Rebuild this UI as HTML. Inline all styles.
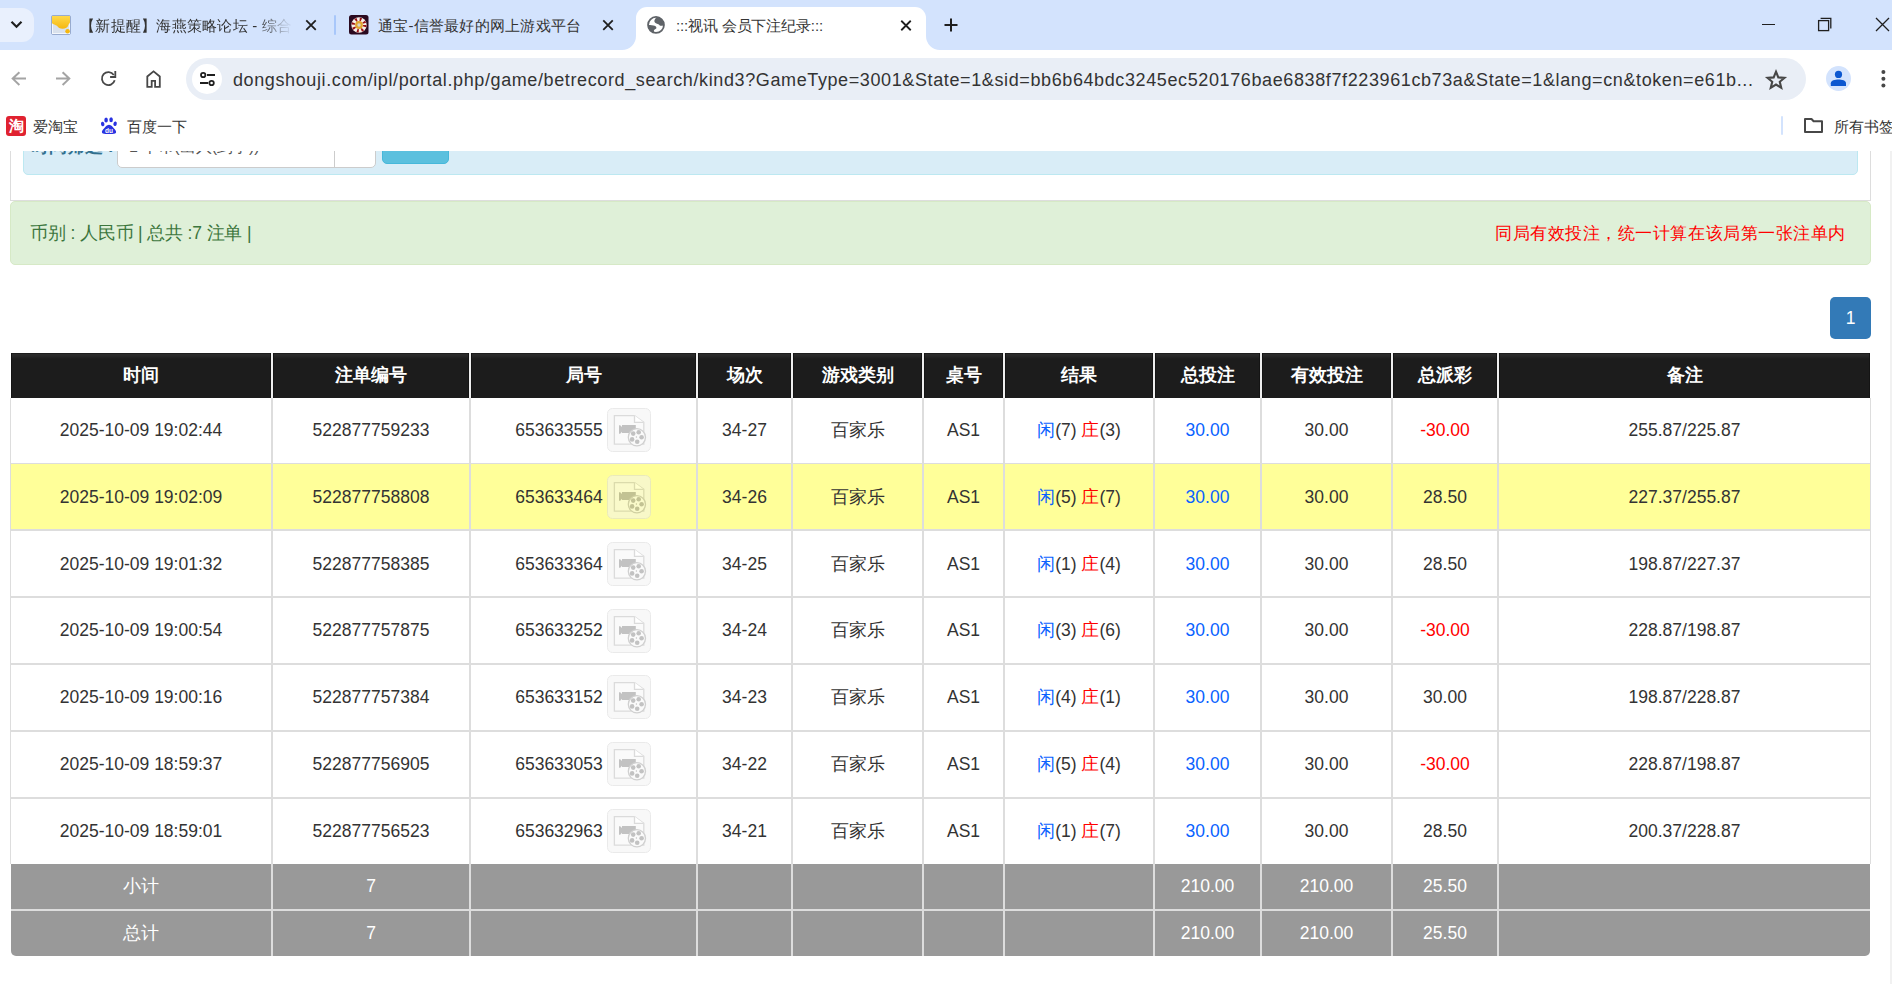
<!DOCTYPE html><html><head><meta charset="utf-8"><title>:::视讯 会员下注纪录:::</title><style>
*{box-sizing:border-box}
html,body{margin:0;padding:0}
body{width:1892px;height:984px;overflow:hidden;position:relative;background:#fff;font-family:"Liberation Sans",sans-serif;color:#333}
.a{position:absolute}
svg{position:absolute;overflow:visible}
.tt{position:absolute;white-space:nowrap;font-size:15px;color:#333;line-height:17px}
#vp{position:absolute;left:0;top:151px;width:1892px;height:833px;overflow:hidden}
.c{position:absolute;display:flex;align-items:center;justify-content:center;white-space:nowrap;font-size:17.5px;line-height:20px}
.hd{color:#fff;font-weight:bold;letter-spacing:0px;background:linear-gradient(#1c1c1c 0,#1c1c1c 1px,#2b2b2b 1px,#272727 3px,#1c1c1c 6px,#1c1c1c);box-shadow:inset 1px 0 #141414,inset -1px 0 #141414}
.b{color:#0a62ff}
.r{color:#f00}
.ic{display:inline-block;width:44px;height:44px;border-radius:5.5px;background:#f2f2f2;border:1px solid #d8d8d8;margin-left:5px;position:relative;left:-.6px;top:.2px;opacity:.53}
</style></head><body>
<div class="a" style="left:0;top:0;width:1892px;height:50px;background:#d3e3fd"></div>
<div class="a" style="left:-12px;top:8px;width:46px;height:34px;border-radius:12px;background:#e9f0fd"></div>
<svg style="left:0;top:0" width="40" height="50"><path d="M11.5 21.8 L16.5 26.8 L21.5 21.8" fill="none" stroke="#1f1f1f" stroke-width="2.2"/></svg>
<svg style="left:51px;top:15px" width="20" height="20" viewBox="0 0 20 20"><defs><linearGradient id="yg" x1="0" y1="0" x2="0" y2="1"><stop offset="0" stop-color="#ffd94a"/><stop offset="1" stop-color="#f5b70f"/></linearGradient></defs><rect x="0.5" y="0.5" width="19" height="19" rx="1.5" fill="#dfe5ee" stroke="#98abcf" stroke-width="1"/><rect x="1.5" y="1.5" width="17" height="17" fill="#d9e1ec" stroke="#f4f7fb" stroke-width="1"/><path d="M1 1 L19 1 L19 7.4 C18.5 8.5 17.4 9.5 17.2 10.5 C16.8 12.3 14.5 13.8 11.6 13.8 C9 13.8 7.2 12.5 6 10.8 C4.5 9.8 2.2 9.2 1 8.2 Z" fill="url(#yg)"/><circle cx="16.6" cy="16.2" r="2.3" fill="#f5b70f"/></svg>
<div class="tt" style="left:80px;top:17px;width:212px;letter-spacing:.25px;overflow:hidden;-webkit-mask-image:linear-gradient(90deg,#000 178px,transparent 212px)">【新提醒】海燕策略论坛 - 综合论坛</div>
<svg style="left:0;top:0" width="1" height="1"><path d="M306.25 20.45 L315.75 29.95 M315.75 20.45 L306.25 29.95" stroke="#1f1f1f" stroke-width="1.8" fill="none"/></svg>
<div class="a" style="left:334px;top:15px;width:2px;height:20px;border-radius:1px;background:#a8c7fa"></div>
<svg style="left:349px;top:15px" width="20" height="20" viewBox="0 0 20 20"><rect x="0" y="0" width="19.5" height="19.5" rx="2.5" fill="#2a0a20"/><circle cx="10" cy="10" r="7.7" fill="#f6efe8"/><circle cx="10" cy="10" r="5.7" fill="none" stroke="#981015" stroke-width="3.4" stroke-dasharray="1.8 2.68"/><circle cx="10" cy="10" r="3.9" fill="#e1a630"/><circle cx="10" cy="10" r="1.7" fill="#d9d4c8"/></svg>
<div class="tt" style="left:378px;top:17px;letter-spacing:.25px">通宝-信誉最好的网上游戏平台</div>
<svg style="left:0;top:0" width="1" height="1"><path d="M603.25 20.45 L612.75 29.95 M612.75 20.45 L603.25 29.95" stroke="#1f1f1f" stroke-width="1.8" fill="none"/></svg>
<div class="a" style="left:636px;top:7px;width:290px;height:44px;background:#fff;border-radius:11px 11px 0 0"></div>
<svg style="left:622px;top:36px" width="14" height="14"><path d="M14 0 L14 14 L0 14 A14 14 0 0 0 14 0 Z" fill="#fff"/></svg>
<svg style="left:926px;top:36px" width="14" height="14"><path d="M0 0 L0 14 L14 14 A14 14 0 0 1 0 0 Z" fill="#fff"/></svg>
<svg style="left:0;top:0" width="1" height="1"><circle cx="656" cy="24.9" r="7.95" fill="none" stroke="#5f6368" stroke-width="1.8"/><path d="M657 17 C655.3 18.4 654.1 20.1 654.4 21.6 C654.8 23.1 656.6 23.6 658.3 24.2 C659.2 24.6 659.5 25.4 660.3 25.7 C661.3 26 662.7 25.5 664 25.2 A8 8 0 0 0 657 17 Z" fill="#5f6368"/><path d="M648 24.9 C650.8 25 653.2 25 654.6 25.7 C656.1 26.4 656.9 27.7 656.2 28.6 C655.4 29.4 653.9 29.7 653.9 30.5 C653.9 31.3 654 32 654.1 32.7 A8 8 0 0 1 648 24.9 Z" fill="#5f6368"/></svg>
<div class="tt" style="left:676px;top:17px;letter-spacing:-.15px">:::视讯 会员下注纪录:::</div>
<svg style="left:0;top:0" width="1" height="1"><path d="M901.25 20.75 L910.75 30.25 M910.75 20.75 L901.25 30.25" stroke="#1f1f1f" stroke-width="1.8" fill="none"/></svg>
<svg style="left:0;top:0" width="1" height="1"><path d="M951 18.5 L951 31.5 M944.5 25 L957.5 25" stroke="#1f1f1f" stroke-width="2" fill="none"/></svg>
<div class="a" style="left:1762px;top:24px;width:13px;height:1.3px;background:#1f1f1f"></div>
<svg style="left:0;top:0" width="1" height="1"><rect x="1818.6" y="20.6" width="10" height="10" fill="none" stroke="#1f1f1f" stroke-width="1.3"/><path d="M1820.6 18.4 L1830.8 18.4 L1830.8 28.6" fill="none" stroke="#1f1f1f" stroke-width="1.3"/></svg>
<svg style="left:0;top:0" width="1" height="1"><path d="M1876 18 L1889 31 M1889 18 L1876 31" stroke="#1f1f1f" stroke-width="1.3" fill="none"/></svg>
<svg style="left:0;top:0" width="1" height="1"><path d="M26 78.6 L13 78.6 M19.4 72.2 L12.7 78.6 L19.4 85" stroke="#a4a4a4" stroke-width="2" fill="none"/><path d="M56 78.6 L69 78.6 M62.6 72.2 L69.3 78.6 L62.6 85" stroke="#a4a4a4" stroke-width="2" fill="none"/></svg>
<svg style="left:0;top:0" width="1" height="1"><path d="M113.8 74.9 A6.5 6.5 0 1 0 114.7 80.3" stroke="#474747" stroke-width="1.8" fill="none"/><path d="M110.1 77 L115.3 77 L115.3 71" stroke="#474747" stroke-width="1.8" fill="none"/></svg>
<svg style="left:0;top:0" width="1" height="1"><path d="M147.3 86.9 L147.3 76.5 L153.55 71.3 L159.8 76.5 L159.8 86.9 L155.1 86.9 L155.1 80.8 L151.7 80.8 L151.7 86.9 Z" stroke="#474747" stroke-width="1.8" fill="none" stroke-linejoin="miter"/></svg>
<div class="a" style="left:186px;top:58px;width:1620px;height:42px;border-radius:21px;background:#e9eef6"></div>
<div class="a" style="left:192px;top:64px;width:30px;height:30px;border-radius:50%;background:#fff"></div>
<svg style="left:0;top:0" width="1" height="1"><circle cx="203.2" cy="75" r="2.2" fill="none" stroke="#1f1f1f" stroke-width="1.8"/><path d="M207 75 L215 75 M200 83 L208.2 83" stroke="#1f1f1f" stroke-width="1.8"/><circle cx="211.6" cy="83" r="2.2" fill="none" stroke="#1f1f1f" stroke-width="1.8"/></svg>
<div class="tt" style="left:233px;top:69.5px;font-size:18px;line-height:21px;letter-spacing:0.612px">dongshouji.com/ipl/portal.php/game/betrecord_search/kind3?GameType=3001&amp;State=1&amp;sid=bb6b64bdc3245ec520176bae6838f7f223961cb73a&amp;State=1&amp;lang=cn&amp;token=e61b...</div>
<svg style="left:0;top:0" width="1" height="1"><path d="M1776.00 71.70 L1778.32 77.40 L1784.46 77.85 L1779.76 81.82 L1781.23 87.80 L1776.00 84.55 L1770.77 87.80 L1772.24 81.82 L1767.54 77.85 L1773.68 77.40 Z" fill="none" stroke="#474747" stroke-width="2.1" stroke-linejoin="miter"/></svg>
<div class="a" style="left:1826px;top:66px;width:25px;height:25px;border-radius:50%;background:#d3e3fd"></div>
<svg style="left:0;top:0" width="1" height="1"><circle cx="1838.5" cy="74.4" r="3.6" fill="#0b57d0"/><path d="M1830.8 86 L1830.8 83.2 C1830.8 80.6 1835 79.6 1838.4 79.6 C1841.8 79.6 1846 80.6 1846 83.2 L1846 86 Z" fill="#0b57d0"/></svg>
<svg style="left:0;top:0" width="1" height="1"><circle cx="1883.4" cy="72" r="2" fill="#474747"/><circle cx="1883.4" cy="78.7" r="2" fill="#474747"/><circle cx="1883.4" cy="85.5" r="2" fill="#474747"/></svg>
<div class="a" style="left:6px;top:116px;width:20px;height:20px;border-radius:3px;background:#e02230;color:#fff;font-size:15px;line-height:20px;text-align:center;font-weight:bold">淘</div>
<div class="tt" style="left:33px;top:118px">爱淘宝</div>
<svg style="left:101px;top:117px" width="17" height="18" viewBox="0 0 17 18"><ellipse cx="1.7" cy="7" rx="1.7" ry="2.3" fill="#2932e1" transform="rotate(-15 1.7 7)"/><ellipse cx="5.1" cy="2.9" rx="1.8" ry="2.5" fill="#2932e1"/><ellipse cx="10.1" cy="2.7" rx="1.8" ry="2.5" fill="#2932e1"/><ellipse cx="14.1" cy="6.8" rx="1.7" ry="2.3" fill="#2932e1" transform="rotate(15 14.1 6.8)"/><path d="M8 7.7 C5.5 7.7 4.5 10 3 11.5 C1.5 13 0.9 14 0.9 15 C0.9 16.5 2.5 16.9 4.5 16.9 L11.5 16.9 C13.5 16.9 15.1 16.5 15.1 15 C15.1 14 14.5 13 13 11.5 C11.5 10 10.5 7.7 8 7.7Z" fill="#2932e1"/><text x="8" y="15.6" font-size="6.5" font-family="Liberation Sans" font-weight="bold" fill="#fff" text-anchor="middle">du</text></svg>
<div class="tt" style="left:127px;top:118px">百度一下</div>
<div class="a" style="left:1781px;top:116px;width:2px;height:19px;border-radius:1px;background:#d3e3fd"></div>
<svg style="left:0;top:0" width="1" height="1"><path d="M1805 119 L1811.5 119 L1813.6 121.2 L1822 121.2 L1822 132 L1805 132 Z" stroke="#474747" stroke-width="2" fill="none" stroke-linejoin="round"/></svg>
<div class="tt" style="left:1834px;top:118px">所有书签</div>
<div id="vp">
<div class="a" style="left:10px;top:-61px;width:1861px;height:111px;border:1px solid #ddd;border-top:0"></div>
<div class="a" style="left:23px;top:-51px;width:1835px;height:75px;border:1px solid #bce8f1;background:#d9edf7;border-radius:5px"></div>
<div class="a" style="left:31px;top:-15.5px;font-size:17.5px;line-height:20px;font-weight:bold;color:#31708f;white-space:nowrap">时间筛选 :</div>
<div class="a" style="left:117px;top:-31px;width:259px;height:48px;border:1px solid #ccc;border-radius:5px;background:#fff"></div>
<div class="a" style="left:334px;top:-31px;width:1px;height:47px;background:#ccc"></div>
<div class="a" style="left:129px;top:-13.699999999999989px;font-size:16px;line-height:20px;color:#555;white-space:nowrap">1 千币(出入(到予))</div>
<div class="a" style="left:382px;top:-31px;width:67px;height:44px;border:1px solid #46b8da;background:#5bc0de;border-radius:5px"></div>
<div class="a" style="left:10px;top:50px;width:1861px;height:64px;border:1px solid #d6e9c6;background:#dff0d8;border-radius:5px"></div>
<div class="a" style="left:30px;top:72.30000000000001px;font-size:17.5px;line-height:20px;letter-spacing:-.15px;color:#3c763d;white-space:nowrap">币别 : 人民币 | 总共 :7 注单 |</div>
<div class="a" style="left:1495px;top:73px;font-size:17px;letter-spacing:0.55px;line-height:20px;color:#f00;white-space:nowrap">同局有效投注，统一计算在该局第一张注单内</div>
<div class="a" style="left:1830px;top:146px;width:41px;height:42px;background:#337ab7;border-radius:5px;color:#fff;font-size:17.5px;line-height:42px;text-align:center">1</div>
<div class="a" style="left:11px;top:202px;width:1859px;height:45px;background:#1c1c1c"></div>
<div class="c hd" style="left:11px;top:202px;width:260px;height:45px;padding-bottom:1.6px">时间</div>
<div class="c hd" style="left:273px;top:202px;width:196px;height:45px;padding-bottom:1.6px">注单编号</div>
<div class="c hd" style="left:471px;top:202px;width:225px;height:45px;padding-bottom:1.6px">局号</div>
<div class="c hd" style="left:698px;top:202px;width:93px;height:45px;padding-bottom:1.6px">场次</div>
<div class="c hd" style="left:793px;top:202px;width:129px;height:45px;padding-bottom:1.6px">游戏类别</div>
<div class="c hd" style="left:924px;top:202px;width:79px;height:45px;padding-bottom:1.6px">桌号</div>
<div class="c hd" style="left:1005px;top:202px;width:148px;height:45px;padding-bottom:1.6px">结果</div>
<div class="c hd" style="left:1155px;top:202px;width:105px;height:45px;padding-bottom:1.6px">总投注</div>
<div class="c hd" style="left:1262px;top:202px;width:129px;height:45px;padding-bottom:1.6px">有效投注</div>
<div class="c hd" style="left:1393px;top:202px;width:104px;height:45px;padding-bottom:1.6px">总派彩</div>
<div class="c hd" style="left:1499px;top:202px;width:371px;height:45px;padding-bottom:1.6px">备注</div>
<div class="a" style="left:11px;top:247px;width:1859px;height:65px;background:#fff"></div>
<div class="a" style="left:10px;top:312px;width:1861px;height:1px;background:#ddd;z-index:1"></div>
<div class="c" style="left:11px;top:246.00px;width:260px;height:66px">2025-10-09 19:02:44</div>
<div class="c" style="left:273px;top:246.00px;width:196px;height:66px">522877759233</div>
<div class="c" style="left:471px;top:246.00px;width:225px;height:66px">653633555<span class="ic"><svg style="left:-1px;top:-1px" width="44" height="44" viewBox="0 0 44 44"><path d="M7.4 7.6 L27.5 7.6 L36.8 14.4 L36.8 36.2 L7.4 36.2 Z" fill="#f7f7f7" stroke="#bdbdbd" stroke-width="1.3"/><path d="M27.5 7.6 L27.5 14.4 L36.8 14.4" fill="#fff" stroke="#bdbdbd" stroke-width="1.3"/><path d="M12 17.3 L13.2 17.3 L15 19 L15 16.9 L28.8 16.9 L28.8 24.9 L15 24.9 L15 23.8 L13.2 25.8 L12 25.8 Z" fill="#8e8e8e"/><circle cx="29.9" cy="29.3" r="8.6" fill="#f7f7f7" stroke="#a8a8a8" stroke-width="1.3"/><circle cx="26.2" cy="25.6" r="2.3" fill="#8e8e8e"/><circle cx="31.7" cy="24.3" r="2.3" fill="#8e8e8e"/><circle cx="34.6" cy="29.3" r="2.3" fill="#8e8e8e"/><circle cx="30.2" cy="33.8" r="2.3" fill="#8e8e8e"/><circle cx="25.1" cy="31.4" r="2.3" fill="#8e8e8e"/><circle cx="29.4" cy="29" r="0.7" fill="#8e8e8e"/></svg></span></div>
<div class="c" style="left:698px;top:246.00px;width:93px;height:66px">34-27</div>
<div class="c" style="left:793px;top:246.00px;width:129px;height:66px">百家乐</div>
<div class="c" style="left:924px;top:246.00px;width:79px;height:66px">AS1</div>
<div class="c" style="left:1005px;top:246.00px;width:148px;height:66px"><span class="b">闲</span>(7)&nbsp;<span class="r">庄</span>(3)</div>
<div class="c" style="left:1155px;top:246.00px;width:105px;height:66px"><span class="b">30.00</span></div>
<div class="c" style="left:1262px;top:246.00px;width:129px;height:66px">30.00</div>
<div class="c" style="left:1393px;top:246.00px;width:104px;height:66px"><span class="r">-30.00</span></div>
<div class="c" style="left:1499px;top:246.00px;width:371px;height:66px">255.87/225.87</div>
<div class="a" style="left:11px;top:313px;width:1859px;height:65px;background:#ffff99"></div>
<div class="a" style="left:10px;top:378px;width:1861px;height:2px;background:#ddd;z-index:1"></div>
<div class="c" style="left:11px;top:312.82px;width:260px;height:66px">2025-10-09 19:02:09</div>
<div class="c" style="left:273px;top:312.82px;width:196px;height:66px">522877758808</div>
<div class="c" style="left:471px;top:312.82px;width:225px;height:66px">653633464<span class="ic"><svg style="left:-1px;top:-1px" width="44" height="44" viewBox="0 0 44 44"><path d="M7.4 7.6 L27.5 7.6 L36.8 14.4 L36.8 36.2 L7.4 36.2 Z" fill="#f7f7f7" stroke="#bdbdbd" stroke-width="1.3"/><path d="M27.5 7.6 L27.5 14.4 L36.8 14.4" fill="#fff" stroke="#bdbdbd" stroke-width="1.3"/><path d="M12 17.3 L13.2 17.3 L15 19 L15 16.9 L28.8 16.9 L28.8 24.9 L15 24.9 L15 23.8 L13.2 25.8 L12 25.8 Z" fill="#8e8e8e"/><circle cx="29.9" cy="29.3" r="8.6" fill="#f7f7f7" stroke="#a8a8a8" stroke-width="1.3"/><circle cx="26.2" cy="25.6" r="2.3" fill="#8e8e8e"/><circle cx="31.7" cy="24.3" r="2.3" fill="#8e8e8e"/><circle cx="34.6" cy="29.3" r="2.3" fill="#8e8e8e"/><circle cx="30.2" cy="33.8" r="2.3" fill="#8e8e8e"/><circle cx="25.1" cy="31.4" r="2.3" fill="#8e8e8e"/><circle cx="29.4" cy="29" r="0.7" fill="#8e8e8e"/></svg></span></div>
<div class="c" style="left:698px;top:312.82px;width:93px;height:66px">34-26</div>
<div class="c" style="left:793px;top:312.82px;width:129px;height:66px">百家乐</div>
<div class="c" style="left:924px;top:312.82px;width:79px;height:66px">AS1</div>
<div class="c" style="left:1005px;top:312.82px;width:148px;height:66px"><span class="b">闲</span>(5)&nbsp;<span class="r">庄</span>(7)</div>
<div class="c" style="left:1155px;top:312.82px;width:105px;height:66px"><span class="b">30.00</span></div>
<div class="c" style="left:1262px;top:312.82px;width:129px;height:66px">30.00</div>
<div class="c" style="left:1393px;top:312.82px;width:104px;height:66px">28.50</div>
<div class="c" style="left:1499px;top:312.82px;width:371px;height:66px">227.37/255.87</div>
<div class="a" style="left:11px;top:379px;width:1859px;height:66px;background:#fff"></div>
<div class="a" style="left:10px;top:445px;width:1861px;height:2px;background:#ddd;z-index:1"></div>
<div class="c" style="left:11px;top:379.65px;width:260px;height:66px">2025-10-09 19:01:32</div>
<div class="c" style="left:273px;top:379.65px;width:196px;height:66px">522877758385</div>
<div class="c" style="left:471px;top:379.65px;width:225px;height:66px">653633364<span class="ic"><svg style="left:-1px;top:-1px" width="44" height="44" viewBox="0 0 44 44"><path d="M7.4 7.6 L27.5 7.6 L36.8 14.4 L36.8 36.2 L7.4 36.2 Z" fill="#f7f7f7" stroke="#bdbdbd" stroke-width="1.3"/><path d="M27.5 7.6 L27.5 14.4 L36.8 14.4" fill="#fff" stroke="#bdbdbd" stroke-width="1.3"/><path d="M12 17.3 L13.2 17.3 L15 19 L15 16.9 L28.8 16.9 L28.8 24.9 L15 24.9 L15 23.8 L13.2 25.8 L12 25.8 Z" fill="#8e8e8e"/><circle cx="29.9" cy="29.3" r="8.6" fill="#f7f7f7" stroke="#a8a8a8" stroke-width="1.3"/><circle cx="26.2" cy="25.6" r="2.3" fill="#8e8e8e"/><circle cx="31.7" cy="24.3" r="2.3" fill="#8e8e8e"/><circle cx="34.6" cy="29.3" r="2.3" fill="#8e8e8e"/><circle cx="30.2" cy="33.8" r="2.3" fill="#8e8e8e"/><circle cx="25.1" cy="31.4" r="2.3" fill="#8e8e8e"/><circle cx="29.4" cy="29" r="0.7" fill="#8e8e8e"/></svg></span></div>
<div class="c" style="left:698px;top:379.65px;width:93px;height:66px">34-25</div>
<div class="c" style="left:793px;top:379.65px;width:129px;height:66px">百家乐</div>
<div class="c" style="left:924px;top:379.65px;width:79px;height:66px">AS1</div>
<div class="c" style="left:1005px;top:379.65px;width:148px;height:66px"><span class="b">闲</span>(1)&nbsp;<span class="r">庄</span>(4)</div>
<div class="c" style="left:1155px;top:379.65px;width:105px;height:66px"><span class="b">30.00</span></div>
<div class="c" style="left:1262px;top:379.65px;width:129px;height:66px">30.00</div>
<div class="c" style="left:1393px;top:379.65px;width:104px;height:66px">28.50</div>
<div class="c" style="left:1499px;top:379.65px;width:371px;height:66px">198.87/227.37</div>
<div class="a" style="left:11px;top:446px;width:1859px;height:66px;background:#fff"></div>
<div class="a" style="left:10px;top:512px;width:1861px;height:2px;background:#ddd;z-index:1"></div>
<div class="c" style="left:11px;top:446.48px;width:260px;height:66px">2025-10-09 19:00:54</div>
<div class="c" style="left:273px;top:446.48px;width:196px;height:66px">522877757875</div>
<div class="c" style="left:471px;top:446.48px;width:225px;height:66px">653633252<span class="ic"><svg style="left:-1px;top:-1px" width="44" height="44" viewBox="0 0 44 44"><path d="M7.4 7.6 L27.5 7.6 L36.8 14.4 L36.8 36.2 L7.4 36.2 Z" fill="#f7f7f7" stroke="#bdbdbd" stroke-width="1.3"/><path d="M27.5 7.6 L27.5 14.4 L36.8 14.4" fill="#fff" stroke="#bdbdbd" stroke-width="1.3"/><path d="M12 17.3 L13.2 17.3 L15 19 L15 16.9 L28.8 16.9 L28.8 24.9 L15 24.9 L15 23.8 L13.2 25.8 L12 25.8 Z" fill="#8e8e8e"/><circle cx="29.9" cy="29.3" r="8.6" fill="#f7f7f7" stroke="#a8a8a8" stroke-width="1.3"/><circle cx="26.2" cy="25.6" r="2.3" fill="#8e8e8e"/><circle cx="31.7" cy="24.3" r="2.3" fill="#8e8e8e"/><circle cx="34.6" cy="29.3" r="2.3" fill="#8e8e8e"/><circle cx="30.2" cy="33.8" r="2.3" fill="#8e8e8e"/><circle cx="25.1" cy="31.4" r="2.3" fill="#8e8e8e"/><circle cx="29.4" cy="29" r="0.7" fill="#8e8e8e"/></svg></span></div>
<div class="c" style="left:698px;top:446.48px;width:93px;height:66px">34-24</div>
<div class="c" style="left:793px;top:446.48px;width:129px;height:66px">百家乐</div>
<div class="c" style="left:924px;top:446.48px;width:79px;height:66px">AS1</div>
<div class="c" style="left:1005px;top:446.48px;width:148px;height:66px"><span class="b">闲</span>(3)&nbsp;<span class="r">庄</span>(6)</div>
<div class="c" style="left:1155px;top:446.48px;width:105px;height:66px"><span class="b">30.00</span></div>
<div class="c" style="left:1262px;top:446.48px;width:129px;height:66px">30.00</div>
<div class="c" style="left:1393px;top:446.48px;width:104px;height:66px"><span class="r">-30.00</span></div>
<div class="c" style="left:1499px;top:446.48px;width:371px;height:66px">228.87/198.87</div>
<div class="a" style="left:11px;top:513px;width:1859px;height:66px;background:#fff"></div>
<div class="a" style="left:10px;top:579px;width:1861px;height:2px;background:#ddd;z-index:1"></div>
<div class="c" style="left:11px;top:513.30px;width:260px;height:66px">2025-10-09 19:00:16</div>
<div class="c" style="left:273px;top:513.30px;width:196px;height:66px">522877757384</div>
<div class="c" style="left:471px;top:513.30px;width:225px;height:66px">653633152<span class="ic"><svg style="left:-1px;top:-1px" width="44" height="44" viewBox="0 0 44 44"><path d="M7.4 7.6 L27.5 7.6 L36.8 14.4 L36.8 36.2 L7.4 36.2 Z" fill="#f7f7f7" stroke="#bdbdbd" stroke-width="1.3"/><path d="M27.5 7.6 L27.5 14.4 L36.8 14.4" fill="#fff" stroke="#bdbdbd" stroke-width="1.3"/><path d="M12 17.3 L13.2 17.3 L15 19 L15 16.9 L28.8 16.9 L28.8 24.9 L15 24.9 L15 23.8 L13.2 25.8 L12 25.8 Z" fill="#8e8e8e"/><circle cx="29.9" cy="29.3" r="8.6" fill="#f7f7f7" stroke="#a8a8a8" stroke-width="1.3"/><circle cx="26.2" cy="25.6" r="2.3" fill="#8e8e8e"/><circle cx="31.7" cy="24.3" r="2.3" fill="#8e8e8e"/><circle cx="34.6" cy="29.3" r="2.3" fill="#8e8e8e"/><circle cx="30.2" cy="33.8" r="2.3" fill="#8e8e8e"/><circle cx="25.1" cy="31.4" r="2.3" fill="#8e8e8e"/><circle cx="29.4" cy="29" r="0.7" fill="#8e8e8e"/></svg></span></div>
<div class="c" style="left:698px;top:513.30px;width:93px;height:66px">34-23</div>
<div class="c" style="left:793px;top:513.30px;width:129px;height:66px">百家乐</div>
<div class="c" style="left:924px;top:513.30px;width:79px;height:66px">AS1</div>
<div class="c" style="left:1005px;top:513.30px;width:148px;height:66px"><span class="b">闲</span>(4)&nbsp;<span class="r">庄</span>(1)</div>
<div class="c" style="left:1155px;top:513.30px;width:105px;height:66px"><span class="b">30.00</span></div>
<div class="c" style="left:1262px;top:513.30px;width:129px;height:66px">30.00</div>
<div class="c" style="left:1393px;top:513.30px;width:104px;height:66px">30.00</div>
<div class="c" style="left:1499px;top:513.30px;width:371px;height:66px">198.87/228.87</div>
<div class="a" style="left:11px;top:580px;width:1859px;height:66px;background:#fff"></div>
<div class="a" style="left:10px;top:646px;width:1861px;height:2px;background:#ddd;z-index:1"></div>
<div class="c" style="left:11px;top:580.12px;width:260px;height:66px">2025-10-09 18:59:37</div>
<div class="c" style="left:273px;top:580.12px;width:196px;height:66px">522877756905</div>
<div class="c" style="left:471px;top:580.12px;width:225px;height:66px">653633053<span class="ic"><svg style="left:-1px;top:-1px" width="44" height="44" viewBox="0 0 44 44"><path d="M7.4 7.6 L27.5 7.6 L36.8 14.4 L36.8 36.2 L7.4 36.2 Z" fill="#f7f7f7" stroke="#bdbdbd" stroke-width="1.3"/><path d="M27.5 7.6 L27.5 14.4 L36.8 14.4" fill="#fff" stroke="#bdbdbd" stroke-width="1.3"/><path d="M12 17.3 L13.2 17.3 L15 19 L15 16.9 L28.8 16.9 L28.8 24.9 L15 24.9 L15 23.8 L13.2 25.8 L12 25.8 Z" fill="#8e8e8e"/><circle cx="29.9" cy="29.3" r="8.6" fill="#f7f7f7" stroke="#a8a8a8" stroke-width="1.3"/><circle cx="26.2" cy="25.6" r="2.3" fill="#8e8e8e"/><circle cx="31.7" cy="24.3" r="2.3" fill="#8e8e8e"/><circle cx="34.6" cy="29.3" r="2.3" fill="#8e8e8e"/><circle cx="30.2" cy="33.8" r="2.3" fill="#8e8e8e"/><circle cx="25.1" cy="31.4" r="2.3" fill="#8e8e8e"/><circle cx="29.4" cy="29" r="0.7" fill="#8e8e8e"/></svg></span></div>
<div class="c" style="left:698px;top:580.12px;width:93px;height:66px">34-22</div>
<div class="c" style="left:793px;top:580.12px;width:129px;height:66px">百家乐</div>
<div class="c" style="left:924px;top:580.12px;width:79px;height:66px">AS1</div>
<div class="c" style="left:1005px;top:580.12px;width:148px;height:66px"><span class="b">闲</span>(5)&nbsp;<span class="r">庄</span>(4)</div>
<div class="c" style="left:1155px;top:580.12px;width:105px;height:66px"><span class="b">30.00</span></div>
<div class="c" style="left:1262px;top:580.12px;width:129px;height:66px">30.00</div>
<div class="c" style="left:1393px;top:580.12px;width:104px;height:66px"><span class="r">-30.00</span></div>
<div class="c" style="left:1499px;top:580.12px;width:371px;height:66px">228.87/198.87</div>
<div class="a" style="left:11px;top:647px;width:1859px;height:66px;background:#fff"></div>
<div class="c" style="left:11px;top:646.95px;width:260px;height:66px">2025-10-09 18:59:01</div>
<div class="c" style="left:273px;top:646.95px;width:196px;height:66px">522877756523</div>
<div class="c" style="left:471px;top:646.95px;width:225px;height:66px">653632963<span class="ic"><svg style="left:-1px;top:-1px" width="44" height="44" viewBox="0 0 44 44"><path d="M7.4 7.6 L27.5 7.6 L36.8 14.4 L36.8 36.2 L7.4 36.2 Z" fill="#f7f7f7" stroke="#bdbdbd" stroke-width="1.3"/><path d="M27.5 7.6 L27.5 14.4 L36.8 14.4" fill="#fff" stroke="#bdbdbd" stroke-width="1.3"/><path d="M12 17.3 L13.2 17.3 L15 19 L15 16.9 L28.8 16.9 L28.8 24.9 L15 24.9 L15 23.8 L13.2 25.8 L12 25.8 Z" fill="#8e8e8e"/><circle cx="29.9" cy="29.3" r="8.6" fill="#f7f7f7" stroke="#a8a8a8" stroke-width="1.3"/><circle cx="26.2" cy="25.6" r="2.3" fill="#8e8e8e"/><circle cx="31.7" cy="24.3" r="2.3" fill="#8e8e8e"/><circle cx="34.6" cy="29.3" r="2.3" fill="#8e8e8e"/><circle cx="30.2" cy="33.8" r="2.3" fill="#8e8e8e"/><circle cx="25.1" cy="31.4" r="2.3" fill="#8e8e8e"/><circle cx="29.4" cy="29" r="0.7" fill="#8e8e8e"/></svg></span></div>
<div class="c" style="left:698px;top:646.95px;width:93px;height:66px">34-21</div>
<div class="c" style="left:793px;top:646.95px;width:129px;height:66px">百家乐</div>
<div class="c" style="left:924px;top:646.95px;width:79px;height:66px">AS1</div>
<div class="c" style="left:1005px;top:646.95px;width:148px;height:66px"><span class="b">闲</span>(1)&nbsp;<span class="r">庄</span>(7)</div>
<div class="c" style="left:1155px;top:646.95px;width:105px;height:66px"><span class="b">30.00</span></div>
<div class="c" style="left:1262px;top:646.95px;width:129px;height:66px">30.00</div>
<div class="c" style="left:1393px;top:646.95px;width:104px;height:66px">28.50</div>
<div class="c" style="left:1499px;top:646.95px;width:371px;height:66px">200.37/228.87</div>
<div class="a" style="left:10px;top:247px;width:1px;height:466px;background:#ddd"></div>
<div class="a" style="left:271px;top:202px;width:2px;height:45px;background:#eee"></div>
<div class="a" style="left:271px;top:247px;width:2px;height:466px;background:#ddd"></div>
<div class="a" style="left:469px;top:202px;width:2px;height:45px;background:#eee"></div>
<div class="a" style="left:469px;top:247px;width:2px;height:466px;background:#ddd"></div>
<div class="a" style="left:696px;top:202px;width:2px;height:45px;background:#eee"></div>
<div class="a" style="left:696px;top:247px;width:2px;height:466px;background:#ddd"></div>
<div class="a" style="left:791px;top:202px;width:2px;height:45px;background:#eee"></div>
<div class="a" style="left:791px;top:247px;width:2px;height:466px;background:#ddd"></div>
<div class="a" style="left:922px;top:202px;width:2px;height:45px;background:#eee"></div>
<div class="a" style="left:922px;top:247px;width:2px;height:466px;background:#ddd"></div>
<div class="a" style="left:1003px;top:202px;width:2px;height:45px;background:#eee"></div>
<div class="a" style="left:1003px;top:247px;width:2px;height:466px;background:#ddd"></div>
<div class="a" style="left:1153px;top:202px;width:2px;height:45px;background:#eee"></div>
<div class="a" style="left:1153px;top:247px;width:2px;height:466px;background:#ddd"></div>
<div class="a" style="left:1260px;top:202px;width:2px;height:45px;background:#eee"></div>
<div class="a" style="left:1260px;top:247px;width:2px;height:466px;background:#ddd"></div>
<div class="a" style="left:1391px;top:202px;width:2px;height:45px;background:#eee"></div>
<div class="a" style="left:1391px;top:247px;width:2px;height:466px;background:#ddd"></div>
<div class="a" style="left:1497px;top:202px;width:2px;height:45px;background:#eee"></div>
<div class="a" style="left:1497px;top:247px;width:2px;height:466px;background:#ddd"></div>
<div class="a" style="left:1870px;top:247px;width:1px;height:466px;background:#ddd"></div>
<div class="a" style="left:11px;top:713px;width:1859px;height:92px;background:#999;border-radius:0 0 5px 5px"></div>
<div class="a" style="left:11px;top:758px;width:1859px;height:2px;background:#ddd"></div>
<div class="a" style="left:271px;top:713px;width:2px;height:92px;background:#ddd"></div>
<div class="a" style="left:469px;top:713px;width:2px;height:92px;background:#ddd"></div>
<div class="a" style="left:696px;top:713px;width:2px;height:92px;background:#ddd"></div>
<div class="a" style="left:791px;top:713px;width:2px;height:92px;background:#ddd"></div>
<div class="a" style="left:922px;top:713px;width:2px;height:92px;background:#ddd"></div>
<div class="a" style="left:1003px;top:713px;width:2px;height:92px;background:#ddd"></div>
<div class="a" style="left:1153px;top:713px;width:2px;height:92px;background:#ddd"></div>
<div class="a" style="left:1260px;top:713px;width:2px;height:92px;background:#ddd"></div>
<div class="a" style="left:1391px;top:713px;width:2px;height:92px;background:#ddd"></div>
<div class="a" style="left:1497px;top:713px;width:2px;height:92px;background:#ddd"></div>
<div class="c" style="left:11px;top:712.4px;width:260px;height:45px;color:#fff">小计</div>
<div class="c" style="left:273px;top:712.4px;width:196px;height:45px;color:#fff">7</div>
<div class="c" style="left:1155px;top:712.4px;width:105px;height:45px;color:#fff">210.00</div>
<div class="c" style="left:1262px;top:712.4px;width:129px;height:45px;color:#fff">210.00</div>
<div class="c" style="left:1393px;top:712.4px;width:104px;height:45px;color:#fff">25.50</div>
<div class="c" style="left:11px;top:759.4px;width:260px;height:45px;color:#fff">总计</div>
<div class="c" style="left:273px;top:759.4px;width:196px;height:45px;color:#fff">7</div>
<div class="c" style="left:1155px;top:759.4px;width:105px;height:45px;color:#fff">210.00</div>
<div class="c" style="left:1262px;top:759.4px;width:129px;height:45px;color:#fff">210.00</div>
<div class="c" style="left:1393px;top:759.4px;width:104px;height:45px;color:#fff">25.50</div>
<div class="a" style="left:1890px;top:0;width:2px;height:833px;background:#f1f1f1"></div>
</div>
</body></html>
